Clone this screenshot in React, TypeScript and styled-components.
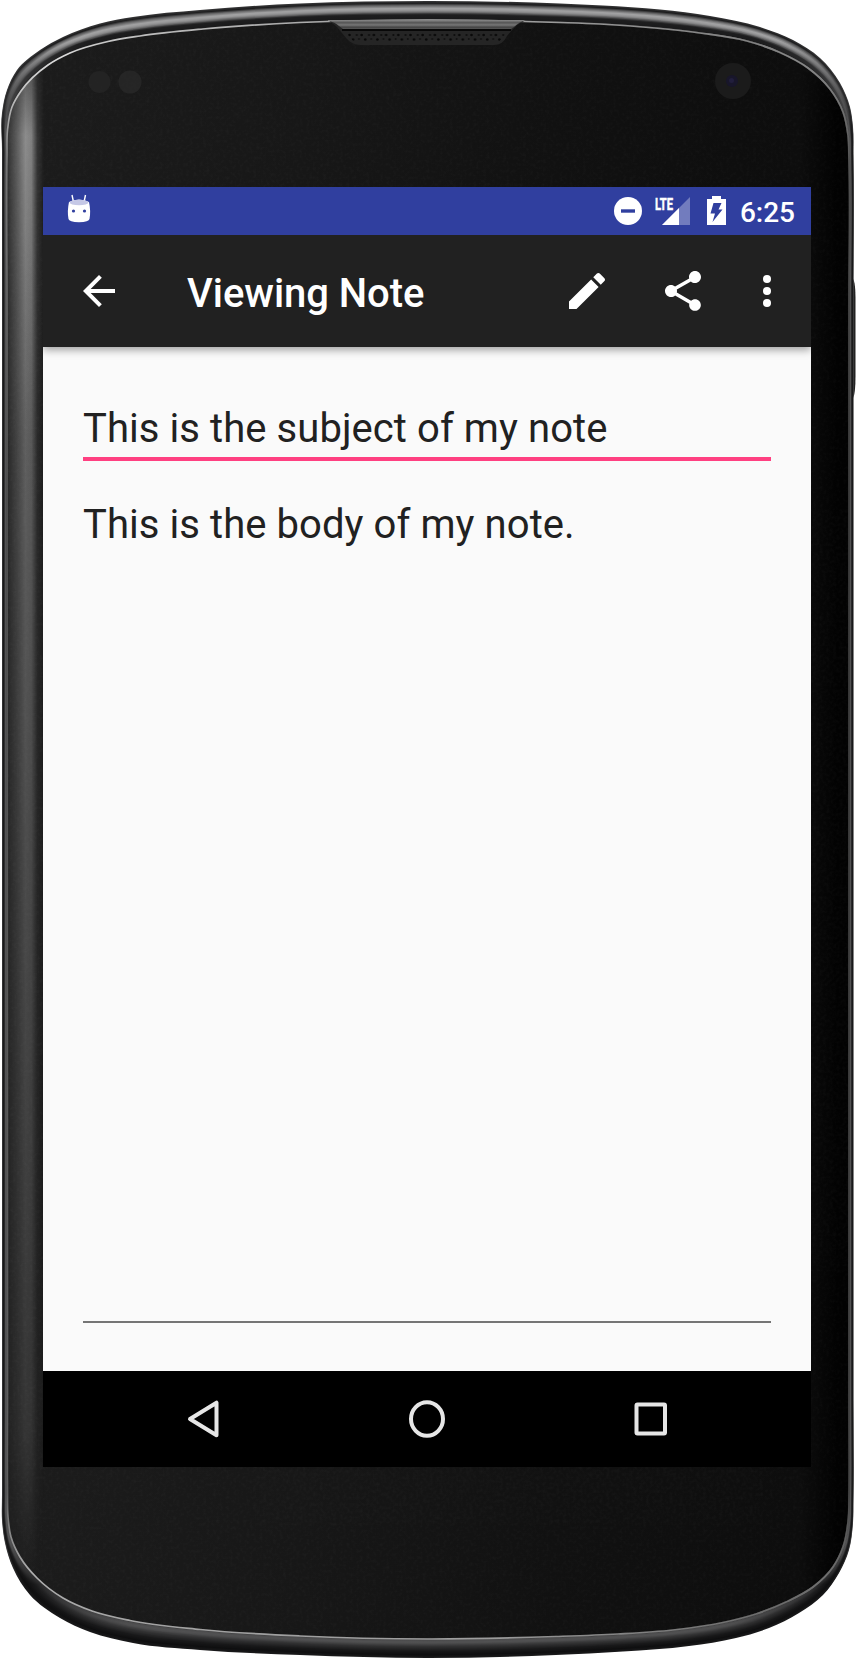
import React from "react";
import styled, { createGlobalStyle } from "styled-components";

const GlobalStyle = createGlobalStyle`
  *, *::before, *::after { box-sizing: border-box; }
  body { margin: 0; background: #fff; font-family: Roboto, "Liberation Sans", sans-serif; }
`;

const Phone = styled.div`
  position: relative;
  width: 856px;
  height: 1659px;
  padding: 187px 45px 192px 43px;
  overflow: hidden;
`;

const Shell = styled.svg`
  position: absolute;
  inset: 0;
  display: block;
`;

const Screen = styled.main`
  position: relative;
  display: flex;
  flex-direction: column;
  width: 768px;
  height: 1280px;
  background: #fafafa;
`;

const StatusBar = styled.div`
  display: flex;
  justify-content: space-between;
  height: 48px;
  padding: 0 16px 0 20px;
  background: #303f9f;
  color: #fff;
`;

const StatusGroup = styled.div`
  display: flex;
  align-items: center;
`;

const StatusIcon = styled.svg<{ $gap?: number }>`
  display: block;
  flex: none;
  margin-right: ${(p) => p.$gap ?? 0}px;
`;

const Clock = styled.span`
  padding-top: 3px;
  font-size: 28px;
  font-weight: 500;
  line-height: 45px;
`;

const AppBar = styled.header`
  position: relative;
  display: flex;
  align-items: center;
  flex: none;
  height: 112px;
  padding: 0 20px 0 32px;
  background: #212121;
  color: #fff;
  box-shadow: 0 3px 8px rgba(0, 0, 0, 0.36);
  clip-path: inset(0 0 -16px 0);
`;

const Title = styled.h1`
  flex: 1;
  margin: 0 0 0 64px;
  padding-top: 5px;
  font-size: 40px;
  font-weight: 500;
  line-height: 48px;
  letter-spacing: -0.06px;
  white-space: nowrap;
`;

const IconButton = styled.button<{ $gap?: number }>`
  width: 48px;
  height: 48px;
  margin: 0 ${(p) => p.$gap ?? 0}px 0 0;
  padding: 0;
  border: 0;
  background: none;
  color: inherit;
  svg { display: block; width: 48px; height: 48px; fill: currentColor; }
`;

const Note = styled.section`
  flex: 1;
  display: flex;
  flex-direction: column;
  padding: 48px 40px;
`;

const Field = styled.div<{ $focused?: boolean; $fill?: boolean }>`
  flex: ${(p) => (p.$fill ? "1" : "none")};
  height: ${(p) => (p.$fill ? "auto" : "66px")};
  margin-top: ${(p) => (p.$fill ? "30px" : "0")};
  border-bottom: ${(p) => (p.$focused ? "4px solid #ff4081" : "2px solid #757575")};
  color: #212121;
  font-size: 40px;
  line-height: 48px;
  letter-spacing: 0.07px;
  padding-top: 10px;
  white-space: nowrap;
`;

const NavBar = styled.nav`
  display: flex;
  align-items: center;
  justify-content: space-between;
  flex: none;
  height: 96px;
  padding: 0 136px;
  background: #000;
`;

const NavButton = styled.button`
  width: 48px;
  height: 48px;
  padding: 0;
  border: 0;
  background: none;
  svg { display: block; fill: none; stroke: #e6e6e6; stroke-width: 4; stroke-linejoin: round; }
`;

type Pt = [number, number];

// Matching points on the outside edge and on the glass edge of the bezel, clockwise.
const edge: [number, number, number, number][] = [
  [2, 1400, 7.5, 1400], [2, 300, 7, 300], [2, 150, 7, 155], [2, 113, 7.5, 130],
  [7, 90, 12, 107], [17, 70, 21, 91], [40, 50, 48, 65], [63, 37, 70, 53],
  [100, 23.5, 108, 41.5], [133, 17, 140, 36], [200, 10, 203, 29], [300, 3.5, 300, 22.5],
  [428, 1, 428, 20], [560, 3.5, 560, 22.5], [603, 5.5, 600, 24], [660, 9.5, 655, 28],
  [710, 16, 700, 33], [760, 27, 747, 41], [793, 40, 780, 52.5], [820, 58, 808, 68],
  [840, 83, 830, 89], [850, 107, 843, 112], [853, 127, 848, 135], [853.5, 155, 849, 160],
  [853.5, 300, 849, 300], [853.5, 1400, 849, 1400], [853.5, 1500, 849, 1495],
  [853, 1523, 848.5, 1517], [849, 1550, 843, 1547], [839, 1573, 833, 1567],
  [823, 1595, 813, 1587], [799, 1613, 786, 1602], [769, 1628, 756, 1614],
  [736, 1638, 723, 1622.5], [689, 1646, 673, 1630], [623, 1651.5, 618, 1634],
  [556, 1655, 556, 1636.5], [428, 1658, 428, 1639], [300, 1655, 300, 1636],
  [200, 1650, 200, 1629.5], [133, 1643, 130, 1620.5], [90, 1632, 92, 1611],
  [60, 1618, 63, 1598], [30, 1595, 37, 1578], [13, 1568, 20, 1557],
  [5, 1543, 11, 1537], [2, 1520, 8, 1517], [2, 1495, 7.5, 1490],
];

function outline(t: number): string {
  const pts: Pt[] = edge.map(([a, b, c, d]) => [a + (c - a) * t, b + (d - b) * t]);
  const n = pts.length;
  const len = pts.map((p, i) => Math.hypot(pts[(i + 1) % n][0] - p[0], pts[(i + 1) % n][1] - p[1]));
  const tan = pts.map((p, i): Pt => {
    const a = pts[(i + n - 1) % n];
    const b = pts[(i + 1) % n];
    const da = len[(i + n - 1) % n];
    const db = len[i];
    return [0, 1].map(
      (k) => (((p[k] - a[k]) / da) * db + ((b[k] - p[k]) / db) * da) / (da + db)
    ) as Pt;
  });
  let d = `M${pts[0].join(" ")}`;
  pts.forEach((p, i) => {
    const j = (i + 1) % n;
    const q = pts[j];
    const l = len[i] / 3;
    d += `C${[
      p[0] + tan[i][0] * l, p[1] + tan[i][1] * l,
      q[0] - tan[j][0] * l, q[1] - tan[j][1] * l, q[0], q[1],
    ].map((v) => v.toFixed(2)).join(" ")}`;
  });
  return d + "Z";
}

// Brightness across the metal rim, from the outside (0) to the glass (1).
const profiles: Record<"top" | "side" | "bottom", Pt[]> = {
  top: [[0, 50], [0.1, 28], [0.2, 95], [0.36, 165], [0.48, 145], [0.6, 85], [0.68, 30], [0.9, 26], [1, 70]],
  side: [[0, 75], [0.18, 20], [0.42, 32], [0.62, 86], [0.82, 80], [1, 35]],
  bottom: [[0, 25], [0.15, 14], [0.35, 24], [0.6, 52], [0.78, 82], [0.9, 76], [1, 30]],
};

function shade(profile: Pt[], t: number): string {
  const i = Math.max(1, profile.findIndex(([x]) => x >= t));
  const [x0, v0] = profile[i - 1];
  const [x1, v1] = profile[i];
  const v = Math.round(v0 + ((v1 - v0) * (t - x0)) / (x1 - x0));
  return `rgb(${v},${v},${v + 1})`;
}

const rings = Array.from({ length: 21 }, (_, i) => i / 20);
const glass = outline(1);

function PhoneShell() {
  return (
    <Shell width="856" height="1659" viewBox="0 0 856 1659" aria-hidden="true">
      <defs>
        {rings.map((t, i) => (
          <linearGradient key={i} id={`ring${i}`} gradientUnits="userSpaceOnUse" x1="0" y1="0" x2="0" y2="1659">
            <stop offset="0.024" stopColor={shade(profiles.top, t)} />
            <stop offset="0.08" stopColor={shade(profiles.side, t)} />
            <stop offset="0.93" stopColor={shade(profiles.side, t)} />
            <stop offset="0.955" stopColor={shade(profiles.bottom, Math.min(1, t * 0.6))} />
            <stop offset="0.98" stopColor={shade(profiles.bottom, t)} />
          </linearGradient>
        ))}
        <linearGradient id="face" x1="0" x2="1" y1="0" y2="0">
          <stop offset="0" stopColor="#1c1c1c" />
          <stop offset="0.35" stopColor="#171717" />
          <stop offset="0.65" stopColor="#111111" />
          <stop offset="0.94" stopColor="#0d0d0d" />
          <stop offset="0.985" stopColor="#020202" />
        </linearGradient>
        <linearGradient id="sheen" gradientUnits="userSpaceOnUse" x1="7" x2="44" y1="0" y2="0">
          <stop offset="0" stopColor="#999" stopOpacity="0.15" />
          <stop offset="0.25" stopColor="#999" stopOpacity="0.5" />
          <stop offset="0.5" stopColor="#a2a2a2" stopOpacity="0.84" />
          <stop offset="0.66" stopColor="#a2a2a2" stopOpacity="0.75" />
          <stop offset="0.82" stopColor="#999" stopOpacity="0.2" />
          <stop offset="1" stopColor="#999" stopOpacity="0" />
        </linearGradient>
        <linearGradient id="fade" gradientUnits="userSpaceOnUse" x1="0" x2="0" y1="60" y2="1580">
          <stop offset="0" stopColor="#777" />
          <stop offset="0.05" stopColor="#fff" />
          <stop offset="0.25" stopColor="#999" />
          <stop offset="0.5" stopColor="#707070" />
          <stop offset="0.9" stopColor="#3a3a3a" />
          <stop offset="1" stopColor="#000" />
        </linearGradient>
        <mask id="sheenMask">
          <rect x="0" y="0" width="60" height="1659" fill="url(#fade)" />
        </mask>
        <linearGradient id="lip" gradientUnits="userSpaceOnUse" x1="0" x2="0" y1="0" y2="1659">
          <stop offset="0" stopColor="#8c8c8c" />
          <stop offset="0.035" stopColor="#ddd" />
          <stop offset="0.06" stopColor="#bbb" />
          <stop offset="0.1" stopColor="#757575" />
          <stop offset="0.3" stopColor="#505050" />
          <stop offset="0.9" stopColor="#606060" />
          <stop offset="0.95" stopColor="#b0b0b0" />
          <stop offset="1" stopColor="#999" />
        </linearGradient>
        <linearGradient id="lipShade" gradientUnits="userSpaceOnUse" x1="0" x2="856" y1="0" y2="0">
          <stop offset="0.55" stopColor="#222" stopOpacity="0" />
          <stop offset="0.9" stopColor="#222" stopOpacity="0.45" />
        </linearGradient>
        <linearGradient id="slot" x1="0" x2="0" y1="0" y2="1">
          <stop offset="0" stopColor="#8a8a8a" />
          <stop offset="0.3" stopColor="#555" />
          <stop offset="0.55" stopColor="#777" />
          <stop offset="0.8" stopColor="#444" />
          <stop offset="1" stopColor="#555" />
        </linearGradient>
        <pattern id="holes" x="348" y="33" width="12.2" height="9" patternUnits="userSpaceOnUse">
          <circle cx="1.5" cy="2" r="1.3" fill="#080808" />
          <circle cx="8.8" cy="2" r="1.1" fill="#0c0c0c" />
          <circle cx="5" cy="6.5" r="1.3" fill="#080808" />
          <circle cx="11" cy="6" r="1" fill="#101010" />
        </pattern>
        <filter id="grain" x="0" y="0" width="100%" height="100%">
          <feTurbulence type="fractalNoise" baseFrequency="0.3" numOctaves="2" seed="4" />
          <feColorMatrix values="0 0 0 0 1  0 0 0 0 1  0 0 0 0 1  0.25 0 0 0 -0.09" />
        </filter>
        <clipPath id="glassClip"><path d={glass} /></clipPath>
      </defs>
      <path d="M853 279Q855.500 282 855.500 300V376Q855.500 394 853 398Z" fill="#222" />
      {rings.map((t, i) => (
        <path key={i} d={outline(t)} fill={`url(#ring${i})`} />
      ))}
      <path d={glass} fill="url(#face)" />
      <g clipPath="url(#glassClip)">
        <rect x="7" y="20" width="38" height="1600" fill="url(#sheen)" mask="url(#sheenMask)" />
        <rect width="856" height="1659" filter="url(#grain)" opacity="0.2" />
      </g>
      <path d={glass} fill="none" stroke="url(#lip)" strokeWidth="1.7" />
      <path d={glass} fill="none" stroke="url(#lipShade)" strokeWidth="2" />
      <path d="M328 20H526L517 25Q511 31 507 36Q503 45 494 45H360Q352 45 346 38L337 27Z" fill="#252525" />
      <path d="M328 20H526Q519 22 514 27L511 29H343L339 26Q335 22 328 21Z" fill="url(#slot)" />
      <path d="M342 30H511" stroke="#080808" strokeWidth="2" />
      <path d="M346 33H507L499 42H354Z" fill="url(#holes)" />
      <circle cx="99.5" cy="82" r="11" fill="#262626" opacity="0.8" />
      <circle cx="130" cy="82" r="11.5" fill="#282828" opacity="0.85" />
      <circle cx="733" cy="81" r="18" fill="#1b1b1b" />
      <circle cx="732" cy="81" r="6" fill="#18162a" />
      <circle cx="731.5" cy="80.5" r="2.500" fill="#211e3c" />
    </Shell>
  );
}

export default function App() {
  return (
    <>
      <GlobalStyle />
      <Phone>
        <PhoneShell />
        <Screen>
          <StatusBar>
            <StatusGroup>
              <StatusIcon width="32" height="48" viewBox="0 0 32 48" fill="#fff">
                <path d="M9 8l1.5 7M22.5 8L21 15" stroke="#fff" strokeWidth="1.4" />
                <path d="M6 15Q16 10 26 15Q28 24 26.5 32Q26 35 16 35.300Q6 35 5.500 32Q4 24 6 15Z" />
                <ellipse cx="16" cy="15.500" rx="9.500" ry="2.800" fill="#c5c8e6" />
                <circle cx="10.500" cy="24" r="1.600" fill="#303f9f" />
                <circle cx="21.500" cy="24" r="1.600" fill="#303f9f" />
              </StatusIcon>
            </StatusGroup>
            <StatusGroup>
              <StatusIcon $gap={13} width="28" height="48" viewBox="0 0 28 48">
                <circle cx="14" cy="24" r="14" fill="#fff" />
                <path d="M7 24H21" stroke="#303f9f" strokeWidth="3.400" />
              </StatusIcon>
              <StatusIcon $gap={17} width="35" height="48" viewBox="0 0 35 48">
                <path d="M35 10V38H7Z" fill="#fff" opacity="0.32" />
                <path d="M24 21V38H7Z" fill="#fff" />
                <text x="0" y="22.500" fill="#fff" stroke="#fff" strokeWidth="0.500" fontSize="17" fontWeight="700" textLength="18" lengthAdjust="spacingAndGlyphs">LTE</text>
              </StatusIcon>
              <StatusIcon $gap={14} width="19" height="48" viewBox="0 0 19 48">
                <path d="M5 9H14V12H19V38H0V12H5Z" fill="#fff" />
                <path d="M6.500 16H14.500L11.500 22.500H15.500L5.500 35L8 26.500H3.500Z" fill="#303f9f" />
              </StatusIcon>
              <Clock>6:25</Clock>
            </StatusGroup>
          </StatusBar>
          <AppBar>
            <IconButton aria-label="Back">
              <svg viewBox="0 0 24 24"><path d="M20 11H7.830l5.590-5.590L12 4l-8 8 8 8 1.410-1.410L7.830 13H20v-2z" /></svg>
            </IconButton>
            <Title>Viewing Note</Title>
            <IconButton aria-label="Edit" $gap={48}>
              <svg viewBox="0 0 24 24"><path d="M3 17.250V21h3.750L17.810 9.940l-3.750-3.750L3 17.250zM20.710 7.040c.39-.39.39-1.020 0-1.410l-2.340-2.340c-.39-.39-1.020-.39-1.410 0l-1.830 1.830 3.750 3.750 1.830-1.830z" /></svg>
            </IconButton>
            <IconButton aria-label="Share" $gap={36}>
              <svg viewBox="0 0 24 24"><path d="M18 16.080c-.76 0-1.440.3-1.960.77L8.910 12.700c.05-.23.09-.46.09-.7s-.04-.47-.09-.7l7.050-4.110c.54.5 1.250.81 2.040.81 1.660 0 3-1.340 3-3s-1.340-3-3-3-3 1.340-3 3c0 .24.04.47.09.7L8.040 9.810C7.500 9.310 6.790 9 6 9c-1.660 0-3 1.340-3 3s1.340 3 3 3c.79 0 1.500-.31 2.040-.81l7.120 4.160c-.05.21-.08.43-.08.65 0 1.610 1.310 2.920 2.920 2.920s2.920-1.310 2.920-2.920-1.310-2.920-2.920-2.920z" /></svg>
            </IconButton>
            <IconButton aria-label="More options">
              <svg viewBox="0 0 24 24"><circle cx="12" cy="6" r="2" /><circle cx="12" cy="12" r="2" /><circle cx="12" cy="18" r="2" /></svg>
            </IconButton>
          </AppBar>
          <Note>
            <Field $focused>This is the subject of my note</Field>
            <Field $fill>This is the body of my note.</Field>
          </Note>
          <NavBar>
            <NavButton aria-label="Back">
              <svg width="48" height="48" viewBox="0 0 48 48"><path d="M10 24L36.500 7.700V40.300Z" transform="translate(1 0)" /></svg>
            </NavButton>
            <NavButton aria-label="Home">
              <svg width="48" height="48" viewBox="0 0 48 48"><ellipse cx="24" cy="24" rx="16" ry="16.700" /></svg>
            </NavButton>
            <NavButton aria-label="Recent apps">
              <svg width="48" height="48" viewBox="0 0 48 48"><rect x="9.500" y="9.500" width="28.500" height="29" rx="1" /></svg>
            </NavButton>
          </NavBar>
        </Screen>
      </Phone>
    </>
  );
}
